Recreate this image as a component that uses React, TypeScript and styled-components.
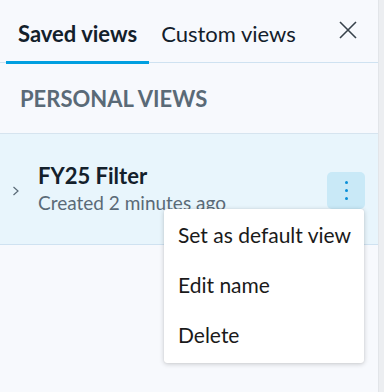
import React from "react";
import styled, { createGlobalStyle } from "styled-components";

const GlobalStyle = createGlobalStyle`
  html, body {
    margin: 0;
    padding: 0;
    background: #eef0f3;
  }
  body {
    font-family: Lato, "Noto Sans", sans-serif;
  }
`;

const Frame = styled.div`
  display: flex;
  width: 384px;
  height: 392px;
  overflow: hidden;
`;

const Panel = styled.div`
  position: relative;
  width: 378px;
  height: 100%;
  background: #f7f9fd;
  display: flex;
  flex-direction: column;
`;

const Gutter = styled.div`
  flex: 1;
  background: #eceef1;
  border-left: 1px solid #e2e5e9;
`;

// Tabs

const TabBar = styled.div`
  display: flex;
  align-items: flex-end;
  height: 62px;
  padding-left: 6px;
  border-bottom: 1px solid #cfe2f1;
`;

const Tab = styled.div<{ $active?: boolean }>`
  padding: 0 12px 14px;
  margin-bottom: -2px;
  font-size: 22px;
  line-height: 26px;
  color: #13202b;
  font-weight: ${(p) => (p.$active ? 700 : 400)};
  border-bottom: 3px solid ${(p) => (p.$active ? "#009fe0" : "transparent")};
`;

const CloseButton = styled.button`
  margin-left: auto;
  margin-right: 20px;
  margin-bottom: 22px;
  width: 20px;
  height: 20px;
  padding: 0;
  border: none;
  background: none;
  display: flex;
  align-items: center;
  justify-content: center;
`;

const SectionTitle = styled.div`
  padding: 22px 20px 0;
  height: 48px;
  font-size: 22px;
  font-weight: 700;
  color: #5a6a77;
  border-bottom: 1px solid #d6e4ef;
  box-sizing: content-box;
`;

// Saved view row

const Row = styled.div`
  display: flex;
  align-items: center;
  height: 110px;
  background: #e8f5fc;
  border-bottom: 1px solid #cfe2f1;
  padding: 0 13px 0 12px;
`;

const Chevron = styled.svg`
  width: 8px;
  height: 10px;
  margin-right: 18px;
  margin-top: 4px;
`;

const RowText = styled.div`
  display: flex;
  flex-direction: column;
  flex: 1;
`;

const RowName = styled.div`
  font-size: 22px;
  font-weight: 700;
  line-height: 28px;
  color: #13202b;
`;

const RowMeta = styled.div`
  font-size: 19px;
  line-height: 26px;
  color: #5a6a77;
`;

const KebabButton = styled.button`
  width: 38px;
  height: 37px;
  border: none;
  border-radius: 5px;
  background: #c9e9f7;
  display: flex;
  flex-direction: column;
  align-items: center;
  justify-content: center;
  gap: 5px;
  padding: 0;
  margin-top: 2px;
`;

const Dot = styled.span`
  width: 3px;
  height: 3px;
  border-radius: 50%;
  background: #0a8fd8;
`;

// Dropdown menu

const Menu = styled.div`
  position: absolute;
  left: 164px;
  top: 209px;
  width: 200px;
  padding: 0 0 4px;
  background: #ffffff;
  border-radius: 3px;
  box-shadow: 0 1px 5px rgba(0, 0, 0, 0.2), 0 0 1px rgba(0, 0, 0, 0.15);
`;

const MenuItem = styled.div`
  height: 50px;
  display: flex;
  align-items: center;
  padding: 0 10px 0 14px;
  font-size: 21px;
  white-space: nowrap;
  color: #1a1a1a;
`;

const App: React.FC = () => {
  return (
    <>
      <GlobalStyle />
      <Frame>
        <Panel>
          <TabBar>
            <Tab $active>Saved views</Tab>
            <Tab>Custom views</Tab>
            <CloseButton aria-label="Close">
              <svg width="18" height="18" viewBox="0 0 18 18">
                <path
                  d="M1 1 L17 17 M17 1 L1 17"
                  stroke="#37424b"
                  strokeWidth="1.6"
                  fill="none"
                />
              </svg>
            </CloseButton>
          </TabBar>
          <SectionTitle>PERSONAL VIEWS</SectionTitle>
          <Row>
            <Chevron viewBox="0 0 8 10">
              <path
                d="M1.5 1 L6 5 L1.5 9"
                stroke="#5a6a77"
                strokeWidth="1.2"
                fill="none"
              />
            </Chevron>
            <RowText>
              <RowName>FY25 Filter</RowName>
              <RowMeta>Created 2 minutes ago</RowMeta>
            </RowText>
            <KebabButton aria-label="More">
              <Dot />
              <Dot />
              <Dot />
            </KebabButton>
          </Row>
          <Menu>
            <MenuItem>Set as default view</MenuItem>
            <MenuItem>Edit name</MenuItem>
            <MenuItem>Delete</MenuItem>
          </Menu>
        </Panel>
        <Gutter />
      </Frame>
    </>
  );
};

export default App;
